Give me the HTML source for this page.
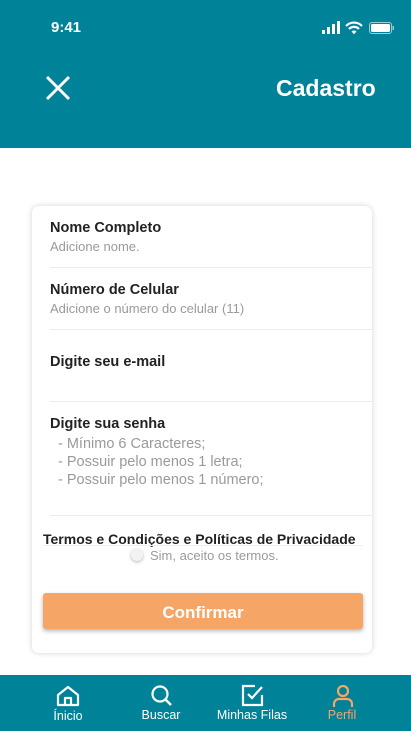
<!DOCTYPE html>
<html><head><meta charset="utf-8"><style>
*{margin:0;padding:0;box-sizing:border-box}
body{width:411px;height:731px;position:relative;background:#fff;font-family:"Liberation Sans",sans-serif;overflow:hidden}
.a{position:absolute}
.hdr{left:0;top:0;width:411px;height:148px;background:#008299}
.card{left:32px;top:206px;width:340px;height:447px;background:#fff;border-radius:7px;box-shadow:0 0 6px rgba(0,0,0,.18)}
.t{font-weight:bold;font-size:14.5px;color:#222}
.s{font-size:13px;color:#9a9a9a}
.ln{height:1px;background:#ebebeb;left:50px;width:322px}
.nav{left:0;top:675px;width:411px;height:56px;background:#008299}
.nl{font-size:12.5px;color:#fff;text-align:center;width:100px}
</style></head><body>
<div class="a hdr"></div>
<div class="a" style="left:51px;top:19px;color:#fff;font-weight:bold;font-size:15px">9:41</div>
<svg class="a" style="left:320px;top:20px" width="75" height="16" viewBox="0 0 75 16">
<rect x="2" y="10" width="3" height="4" fill="#fff"/><rect x="7" y="7" width="3" height="7" fill="#fff"/><rect x="12" y="4" width="3" height="10" fill="#fff"/><rect x="17" y="1" width="3" height="13" fill="#fff"/>
<path d="M26 6a11 11 0 0 1 16 0M29 9a7 7 0 0 1 10 0" stroke="#fff" stroke-width="2.2" fill="none"/><path d="M31.5 11.5l2.5 2.8l2.5-2.8a3.5 3.5 0 0 0-5 0z" fill="#fff"/>
<rect x="49.5" y="2.5" width="22" height="11" rx="2.5" fill="none" stroke="#fff" stroke-opacity=".6"/><rect x="51" y="4" width="19" height="8" rx="1.5" fill="#fff"/><rect x="72.5" y="6" width="1.5" height="4" fill="#fff" fill-opacity=".6"/>
</svg>
<svg class="a" style="left:45px;top:75px" width="26" height="26"><path d="M2 2L24 24M24 2L2 24" stroke="#fff" stroke-width="3"/></svg>
<div class="a" style="left:276px;top:75px;color:#fff;font-weight:bold;font-size:23px">Cadastro</div>
<div class="a card"></div>
<div class="a t" style="left:50px;top:220px">Nome Completo</div>
<div class="a s" style="left:50px;top:239px">Adicione nome.</div>
<div class="a ln" style="top:267px"></div>
<div class="a t" style="left:50px;top:282px">Número de Celular</div>
<div class="a s" style="left:50px;top:301px">Adicione o número do celular (11)</div>
<div class="a ln" style="top:329px"></div>
<div class="a t" style="left:50px;top:354px">Digite seu e-mail</div>
<div class="a ln" style="top:401px"></div>
<div class="a t" style="left:50px;top:416px">Digite sua senha</div>
<div class="a" style="left:58px;top:435px;font-size:14.5px;color:#9a9a9a;line-height:18px">- Mínimo 6 Caracteres;<br>- Possuir pelo menos 1 letra;<br>- Possuir pelo menos 1 número;</div>
<div class="a ln" style="top:515px"></div>
<div class="a t" style="left:43px;top:531px;font-size:14px">Termos e Condições e Políticas de Privacidade</div>
<div class="a" style="left:43px;top:545px;width:320px;height:1px;background:#eee"></div>
<div class="a" style="left:131px;top:549px;width:12px;height:12px;border-radius:50%;background:#f2f2f2;box-shadow:0 1px 3px rgba(0,0,0,.3)"></div>
<div class="a s" style="left:150px;top:548px">Sim, aceito os termos.</div>
<div class="a" style="left:43px;top:593px;width:320px;height:36px;background:#f5a667;border-radius:3px;box-shadow:0 2px 4px rgba(0,0,0,.3);color:#fff;font-weight:bold;font-size:17px;text-align:center;line-height:40px">Confirmar</div>
<div class="a nav"></div>
<svg class="a" style="left:56px;top:685px" width="24" height="22" viewBox="0 0 24 22"><path d="M2 10L12 2L22 10V20H2Z M9 20V13H15V20" stroke="#fff" stroke-width="2.2" fill="none" stroke-linejoin="round"/></svg>
<div class="a nl" style="left:18px;top:709px">Ínicio</div>
<svg class="a" style="left:150px;top:685px" width="24" height="22" viewBox="0 0 24 22"><circle cx="10" cy="9" r="7.5" stroke="#fff" stroke-width="2.2" fill="none"/><path d="M15.5 14.5L21 20" stroke="#fff" stroke-width="2.4"/></svg>
<div class="a nl" style="left:111px;top:708px">Buscar</div>
<svg class="a" style="left:241px;top:684px" width="24" height="24" viewBox="0 0 24 24"><path d="M14 2H2V21H21V11" stroke="#fff" stroke-width="2.2" fill="none"/><path d="M7 10L11 14L21 3" stroke="#fff" stroke-width="2.2" fill="none"/></svg>
<div class="a nl" style="left:202px;top:708px">Minhas Filas</div>
<svg class="a" style="left:331px;top:684px" width="24" height="24" viewBox="0 0 24 24"><circle cx="12" cy="7" r="5" stroke="#f5a667" stroke-width="2.2" fill="none"/><path d="M3 23V20A5 5 0 0 1 8 15H16A5 5 0 0 1 21 20V23" stroke="#f5a667" stroke-width="2.2" fill="none"/></svg>
<div class="a nl" style="left:292px;top:708px;color:#f5a667">Perfil</div>
</body></html>
